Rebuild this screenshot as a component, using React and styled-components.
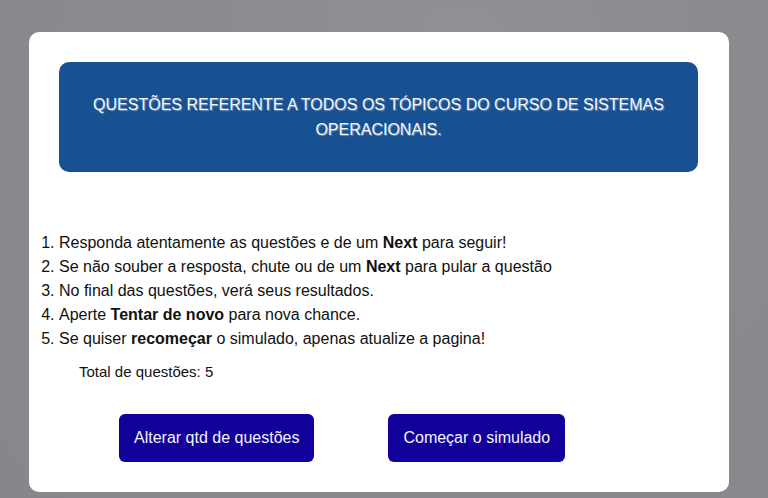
import React from 'react'
import styled, { createGlobalStyle } from 'styled-components'

const Global = createGlobalStyle`
    html, body {
        margin: 0;
        padding: 0;
        height: 100%;
    }
    body {
        font-family: "Liberation Sans", Arial, sans-serif;
        background: radial-gradient(ellipse at 60% 10%, #8f9194 0%, #898b8e 40%, #85878a 100%);
    }
`

const Page = styled.div`
    min-height: 498px;
    padding: 32px 39px 0 29px;
    box-sizing: border-box;
`

const Modal = styled.div`
    background: #fff;
    border-radius: 10px;
    padding: 30px 31px 29px 30px;
    height: 460px;
    box-sizing: border-box;
`

const Banner = styled.div`
    background: #175192;
    border-radius: 10px;
    height: 110px;
    display: flex;
    align-items: center;
    justify-content: center;
    padding: 0 30px;
    box-sizing: border-box;
`

const BannerText = styled.p`
    margin: 0;
    color: #f4f6fb;
    font-size: 16px;
    line-height: 25px;
    letter-spacing: 0;
    text-align: center;
    text-shadow: 1px 1px 1px #7a8fb0;
`

const Rules = styled.ol`
    margin: 59px 0 0 0;
    padding: 0;
    font-size: 16px;
    line-height: 24px;
    color: #111;
`

const Total = styled.p`
    margin: 11px 0 0 20px;
    font-size: 15px;
    line-height: 20px;
    color: #111;
`

const Actions = styled.div`
    display: flex;
    gap: 74px;
    margin: 32px 0 0 60px;
`

const Button = styled.button`
    background: #11009a;
    color: #f4f4ff;
    border: none;
    border-radius: 6px;
    height: 48px;
    padding: 0 15px;
    font-family: "Liberation Sans", Arial, sans-serif;
    font-size: 16px;
    cursor: pointer;
`

function App() {
    return (
        <Page>
            <Global />
            <Modal>
                <Banner>
                    <BannerText>
                        QUESTÕES REFERENTE A TODOS OS TÓPICOS DO CURSO DE SISTEMAS OPERACIONAIS.
                    </BannerText>
                </Banner>
                <Rules>
                    <li>Responda atentamente as questões e de um <b>Next</b> para seguir!</li>
                    <li>Se não souber a resposta, chute ou de um <b>Next</b> para pular a questão</li>
                    <li>No final das questões, verá seus resultados.</li>
                    <li>Aperte <b>Tentar de novo</b> para nova chance.</li>
                    <li>Se quiser <b>recomeçar</b> o simulado, apenas atualize a pagina!</li>
                </Rules>
                <Total>Total de questões: 5</Total>
                <Actions>
                    <Button>Alterar qtd de questões</Button>
                    <Button>Começar o simulado</Button>
                </Actions>
            </Modal>
        </Page>
    )
}

export default App
